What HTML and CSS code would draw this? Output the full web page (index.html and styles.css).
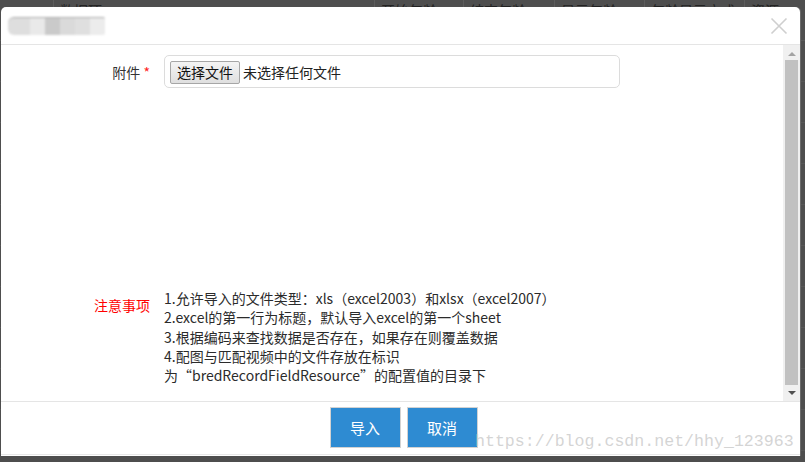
FILE: index.html
```html
<!DOCTYPE html>
<html lang="zh-CN">
<head>
<meta charset="utf-8">
<title>导入</title>
<link rel="stylesheet" href="styles.css">
</head>
<body>
<div class="page">
  <div class="bg-head">
    <div class="bg-cell c0"></div>
    <div class="bg-cell c1">数据项</div>
    <div class="bg-cell c2">开始年龄</div>
    <div class="bg-cell c3">结束年龄</div>
    <div class="bg-cell c4">显示年龄</div>
    <div class="bg-cell c5">年龄显示方式</div>
    <div class="bg-cell c6">资源</div>
  </div>
  <div class="bg-row"></div>
  <div class="bg-row"></div>
  <div class="bg-row"></div>
  <div class="bg-row"></div>
  <div class="bg-row"></div>
  <div class="bg-row"></div>
  <div class="bg-row"></div>
  <div class="bg-row"></div>
  <div class="bg-row"></div>
  <div class="bg-row"></div>
</div>

<div class="modal">
  <div class="modal-header">
    <div class="blurred-title"></div>
    <svg class="close" width="18" height="18" viewBox="0 0 18 18">
      <path d="M1.5 1.5 L16.5 16.5 M16.5 1.5 L1.5 16.5" stroke="#cfcfcf" stroke-width="1.6" fill="none"/>
    </svg>
  </div>
  <div class="modal-body">
    <div class="content">
      <div class="form-row">
        <div class="label">附件 <span class="req">*</span></div>
        <div class="file-box">
          <span class="file-btn">选择文件</span>
          <span class="file-name">未选择任何文件</span>
        </div>
      </div>
      <div class="form-row notes-row">
        <div class="label notes-label">注意事项</div>
        <div class="notes">
          <div>1.允许导入的文件类型：xls（excel2003）和xlsx（excel2007）</div>
          <div>2.excel的第一行为标题，默认导入excel的第一个sheet</div>
          <div>3.根据编码来查找数据是否存在，如果存在则覆盖数据</div>
          <div>4.配图与匹配视频中的文件存放在标识</div>
          <div>为“bredRecordFieldResource”的配置值的目录下</div>
        </div>
      </div>
    </div>
    <div class="scrollbar">
      <div class="arrow up"></div>
      <div class="thumb"></div>
      <div class="arrow down"></div>
    </div>
  </div>
  <div class="modal-footer">
    <button class="btn">导入</button>
    <button class="btn">取消</button>
  </div>
  <div class="watermark">https://blog.csdn.net/hhy_123963</div>
</div>
</body>
</html>
```
FILE: styles.css
```css
html, body {
  margin: 0;
  padding: 0;
}
body {
  width: 805px;
  height: 462px;
  overflow: hidden;
  background: #4e4e4e;
  font-family: "Noto Sans CJK SC", "Noto Sans", sans-serif;
  position: relative;
}
.page {
  width: 805px;
}
.bg-head {
  display: flex;
  height: 40px;
  border-bottom: 1px solid #5a5a5a;
  color: #222;
  font-size: 14px;
  line-height: 14px;
}
.bg-cell {
  padding: 3px 0 0 6px;
  border-right: 1px solid #5c5c5c;
  box-sizing: border-box;
  white-space: nowrap;
  overflow: hidden;
}
.c0 { width: 54px; }
.c1 { width: 321px; }
.c2 { width: 89px; }
.c3 { width: 91px; }
.c4 { width: 90px; }
.c5 { width: 100px; }
.c6 { width: 60px; border-right: 0; }
.bg-row {
  height: 40px;
  border-bottom: 1px solid #575757;
}

.modal {
  position: absolute;
  left: 1px;
  top: 7px;
  width: 799px;
  height: 449px;
  background: #fff;
  border-radius: 5px 5px 0 0;
  display: flex;
  flex-direction: column;
  padding-bottom: 1px;
  box-sizing: border-box;
  box-shadow: 1px 0 0 #6a6a6a;
}
.modal-header {
  height: 37px;
  border-bottom: 1px solid #e5e5e5;
  display: flex;
  align-items: center;
  justify-content: space-between;
  padding: 0 12px 0 7px;
  flex: none;
}
.blurred-title {
  width: 97px;
  height: 17px;
  margin-top: 1px;
  border-radius: 6px 2px 2px 6px;
  background: linear-gradient(90deg, #dedede 0, #dedede 22px, #e9e9e9 22px, #e9e9e9 37px, #cacaca 37px, #cacaca 52px, #dadada 52px, #dadada 67px, #dfdfdf 67px, #dfdfdf 82px, #ececec 82px, #ececec 97px);
  border-top: 1px solid #aaa;
  filter: blur(0.8px);
}
.close {
  display: block;
  margin-top: 1px;
}
.modal-body {
  height: 356px;
  display: flex;
  flex: none;
}
.content {
  flex: 1;
  padding-top: 10px;
}
.form-row {
  display: flex;
  align-items: center;
}
.label {
  width: 149px;
  padding-right: 14px;
  text-align: right;
  font-size: 14px;
  color: #333;
  flex: none;
}
.req {
  color: #f22;
}
.file-box {
  width: 456px;
  height: 33px;
  box-sizing: border-box;
  border: 1px solid #dcdcdc;
  border-radius: 5px;
  display: flex;
  align-items: center;
  padding-left: 5px;
  padding-top: 1px;
  font-size: 14px;
  color: #222;
}
.file-btn {
  width: 70px;
  height: 23px;
  box-sizing: border-box;
  border: 1px solid #a6a6a6;
  border-radius: 2px;
  background: linear-gradient(#f4f4f4, #dfdfdf);
  display: flex;
  align-items: center;
  justify-content: center;
  font-size: 14px;
  color: #111;
}
.file-name {
  margin-left: 3px;
}
.notes-row {
  align-items: flex-start;
  margin-top: 201px;
}
.notes-label {
  color: #f00;
  padding-top: 7px;
  line-height: 19.3px;
}
.notes {
  font-size: 14px;
  line-height: 19.3px;
  color: #2b2b2b;
  white-space: nowrap;
}
.scrollbar {
  width: 17px;
  background: #f0f0f0;
  display: flex;
  flex-direction: column;
  align-items: center;
  flex: none;
}
.thumb {
  width: 13px;
  flex: 1;
  background: #c1c1c1;
  margin: 4px 0;
}
.arrow {
  width: 0;
  height: 0;
  border-left: 4px solid transparent;
  border-right: 4px solid transparent;
}
.arrow.up {
  border-bottom: 4px solid #a3a3a3;
  margin-top: 7px;
}
.arrow.down {
  border-top: 4px solid #505050;
  margin: 2px 0 6px;
}
.modal-footer {
  border-top: 1px solid #e5e5e5;
  border-bottom: 1px solid #e8e8e8;
  padding: 5px 0 6px 6px;
  display: flex;
  justify-content: center;
  gap: 6px;
  flex: none;
}
.btn {
  width: 71px;
  height: 41px;
  box-sizing: border-box;
  border: 1px solid #d2d2d2;
  border-radius: 0;
  background: #2e8bd2;
  color: #fff;
  font-family: "Noto Sans CJK SC", sans-serif;
  font-size: 15px;
  padding: 0;
  margin: 0;
}
.watermark {
  position: absolute;
  left: 474px;
  top: 425px;
  font-family: "Liberation Mono", monospace;
  font-size: 16.6px;
  color: rgba(205, 205, 205, 0.85);
  white-space: nowrap;
}
```
